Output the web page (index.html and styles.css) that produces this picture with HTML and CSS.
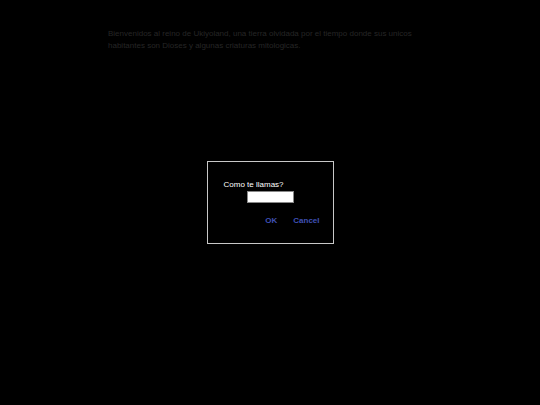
FILE: index.html
```html
<!DOCTYPE html>
<html lang="es">
<head>
<meta charset="utf-8">
<link rel="stylesheet" href="styles.css">
</head>
<body>
<p class="intro">Bienvenidos al reino de Ukiyoland, una tierra olvidada por el tiempo donde sus unicos habitantes son Dioses y algunas criaturas mitologicas.</p>
<div class="overlay">
  <div class="dialog">
    <div class="label">Como te llamas?</div>
    <div class="field"><input class="input" type="text"></div>
    <div class="actions">
      <span class="btn">OK</span>
      <span class="btn">Cancel</span>
    </div>
  </div>
</div>
</body>
</html>
```
FILE: styles.css
```css
html, body {
  margin: 0;
  padding: 0;
  background: #000;
  height: 100%;
}
body {
  font-family: "Liberation Sans", Arial, sans-serif;
}
.intro {
  margin: 0;
  padding: 28px 0 0 108px;
  width: 312px;
  font-size: 8px;
  line-height: 12px;
  color: #262626;
}
.overlay {
  position: fixed;
  inset: 0;
  display: flex;
  align-items: center;
  justify-content: center;
}
.dialog {
  box-sizing: border-box;
  width: 127px;
  height: 83px;
  border: 1px solid #c8c8c8;
  background: #000;
  padding: 18px 0 0 16px;
  display: flex;
  flex-direction: column;
}
.label {
  font-size: 8px;
  line-height: 10px;
  color: #fff;
}
.field {
  display: flex;
  justify-content: center;
  padding-right: 16px;
  margin-top: 1px;
}
.input {
  box-sizing: border-box;
  width: 47px;
  height: 12px;
  margin: 0;
  padding: 0;
  border: 1px solid #888;
  background: #fff;
  outline: none;
}
.actions {
  display: flex;
  justify-content: flex-end;
  gap: 16px;
  padding-right: 13px;
  margin-top: 13px;
}
.btn {
  font-size: 8px;
  line-height: 10px;
  font-weight: bold;
  color: #3f51b5;
}
```
